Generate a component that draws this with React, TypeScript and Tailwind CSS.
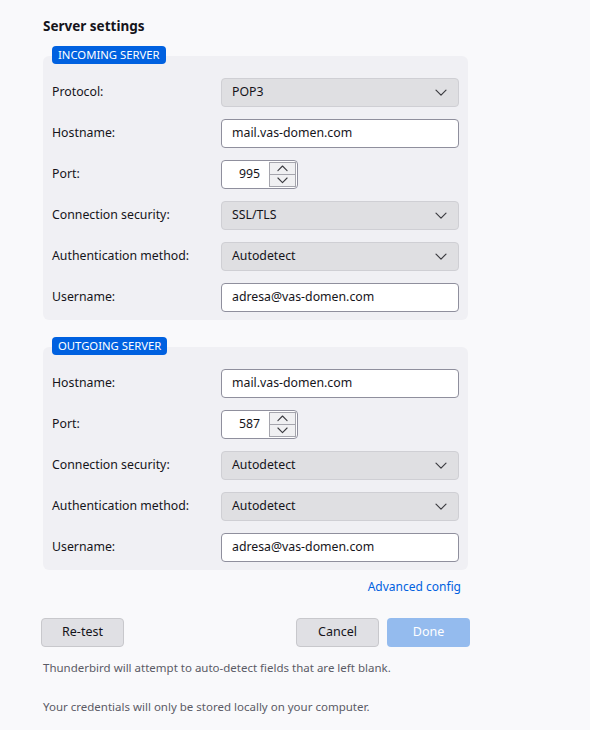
import React from 'react';

const font = { fontFamily: '"Noto Sans", "Open Sans", Arial, sans-serif' };

function Chevron({ up = false, size = 12 }: { up?: boolean; size?: number }) {
  return (
    <svg width={size} height={size * 0.6} viewBox="0 0 12 7" fill="none">
      <path
        d={up ? 'M1 6L6 1L11 6' : 'M1 1L6 6L11 1'}
        stroke="#3b3b40"
        strokeWidth="1.2"
        strokeLinejoin="round"
        strokeLinecap="round"
      />
    </svg>
  );
}

function Select({ value }: { value: string }) {
  return (
    <div className="flex h-[29px] w-[238px] items-center justify-between rounded-[4px] border border-[#cfcfd4] bg-[#dfdfe2] pl-[10px] pr-[11px] text-[12.3px] text-[#15141a]">
      <span>{value}</span>
      <Chevron />
    </div>
  );
}

function TextInput({ value }: { value: string }) {
  return (
    <div className="flex h-[29px] w-[238px] items-center rounded-[4px] border border-[#8f8f9d] bg-white px-[10px] text-[12.3px] text-[#15141a]">
      {value}
    </div>
  );
}

function Port({ value }: { value: string }) {
  return (
    <div className="flex h-[29px] w-[77px] items-stretch rounded-[4px] border border-[#8f8f9d] bg-white p-px text-[12.3px] text-[#15141a]">
      <div className="flex flex-1 items-center justify-end pr-[9px]">{value}</div>
      <div className="flex w-[27px] flex-col border border-[#a5a5ad]">
        <div className="flex flex-1 items-center justify-center border-b border-[#a5a5ad] bg-[#f0f0f2]">
          <Chevron up size={11} />
        </div>
        <div className="flex flex-1 items-center justify-center bg-[#f0f0f2]">
          <Chevron size={11} />
        </div>
      </div>
    </div>
  );
}

function Row({ label, children }: { label: string; children: React.ReactNode }) {
  return (
    <div className="flex h-[29px] items-center">
      <div className="w-[169px] text-[12.3px] text-[#15141a]">{label}</div>
      {children}
    </div>
  );
}

function Section({ title, children }: { title: string; children: React.ReactNode }) {
  return (
    <div className="flex flex-col">
      <div className="relative z-10 ml-[9px] flex h-[18px] w-fit items-center rounded-[4px] bg-[#0061e0] px-[6px] text-[11.3px] text-white">
        {title}
      </div>
      <div className="-mt-[8px] flex flex-col gap-[12px] rounded-[6px] bg-[#f0f0f4] pb-[8px] pl-[9px] pr-[9px] pt-[22px]">
        {children}
      </div>
    </div>
  );
}

function Button({ children, primary = false, className = '' }: { children: React.ReactNode; primary?: boolean; className?: string }) {
  return (
    <div
      className={`flex h-[29px] w-[83px] items-center justify-center rounded-[4px] text-[12.5px] ${
        primary ? 'bg-[#94bbee] text-white' : 'border border-[#c8c8cc] bg-[#e0e0e4] text-[#15141a]'
      } ${className}`}
    >
      {children}
    </div>
  );
}

export default function App() {
  return (
    <div className="min-h-[730px] w-[590px] bg-[#f9f9fb] pl-[43px] pt-[17px]" style={font}>
      <div className="w-[425px]">
        <div className="text-[13.5px] font-bold leading-[18px] text-[#15141a]">Server settings</div>

        <div className="mt-[11px]">
          <Section title="INCOMING SERVER">
            <Row label="Protocol:">
              <Select value="POP3" />
            </Row>
            <Row label="Hostname:">
              <TextInput value="mail.vas-domen.com" />
            </Row>
            <Row label="Port:">
              <Port value="995" />
            </Row>
            <Row label="Connection security:">
              <Select value="SSL/TLS" />
            </Row>
            <Row label="Authentication method:">
              <Select value="Autodetect" />
            </Row>
            <Row label="Username:">
              <TextInput value="adresa@vas-domen.com" />
            </Row>
          </Section>
        </div>

        <div className="mt-[17px]">
          <Section title="OUTGOING SERVER">
            <Row label="Hostname:">
              <TextInput value="mail.vas-domen.com" />
            </Row>
            <Row label="Port:">
              <Port value="587" />
            </Row>
            <Row label="Connection security:">
              <Select value="Autodetect" />
            </Row>
            <Row label="Authentication method:">
              <Select value="Autodetect" />
            </Row>
            <Row label="Username:">
              <TextInput value="adresa@vas-domen.com" />
            </Row>
          </Section>
        </div>

        <div className="mt-[8px] flex justify-end pr-[7px] text-[12px] leading-[18px] text-[#0061e0]">
          Advanced config
        </div>

        <div className="-ml-[2px] mt-[22px] flex w-[429px] items-center">
          <Button>Re-test</Button>
          <div className="flex-1" />
          <Button>Cancel</Button>
          <Button primary className="ml-[8px]">
            Done
          </Button>
        </div>

        <div className="mt-[13px] text-[11.5px] leading-[16px] text-[#5b5b66]">
          Thunderbird will attempt to auto-detect fields that are left blank.
        </div>
        <div className="mt-[23px] text-[11.5px] leading-[16px] text-[#5b5b66]">
          Your credentials will only be stored locally on your computer.
        </div>
      </div>
    </div>
  );
}
